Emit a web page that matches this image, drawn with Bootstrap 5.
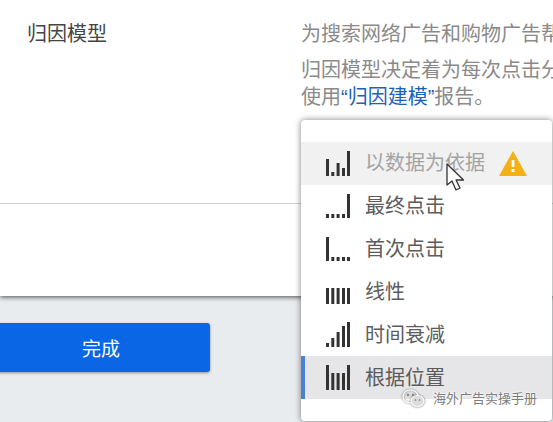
<!DOCTYPE html>
<html lang="zh-CN">
<head>
  <meta charset="UTF-8">
  <title>归因模型</title>
  <meta name="viewport" content="width=device-width, initial-scale=1">
  <link href="https://cdn.jsdelivr.net/npm/bootstrap@5.3.0/dist/css/bootstrap.min.css" rel="stylesheet">
  <script src="https://cdn.jsdelivr.net/npm/bootstrap@5.3.0/dist/js/bootstrap.bundle.min.js"></script>

  <style>
    html, body {
      height: 422px;
      overflow: hidden;
    }
    body {
      font-family: "Liberation Sans", "Noto Sans CJK SC", sans-serif;
      background-color: #e9ecee;
      color: #5c5c5c;
      font-size: 20px;
    }
    .panel-box {
      height: 296px;
      background-color: white;
      box-shadow: 0 1px 5px rgba(0,0,0,0.7);
      overflow: hidden;
    }
    .setting-row {
      height: 204px;
      padding-top: 19px;
      border-bottom: 1px solid #d2d2d2;
    }
    .setting-label {
      width: 301px;
      padding-left: 27px;
      color: #444;
      line-height: 30px;
    }
    .setting-desc {
      white-space: nowrap;
      color: #8a8a8a;
      line-height: 27px;
    }
    .setting-desc p {
      margin: 0;
    }
    .setting-desc .first-line {
      line-height: 30px;
      margin-bottom: 8px;
    }
    .setting-desc a {
      color: #1a62b8;
      text-decoration: none;
    }
    .done-btn {
      width: 218px;
      height: 49px;
      margin: 27px 0 0 -8px;
      padding-top: 12px;
      background-color: #0a66e4;
      border: 0;
      border-radius: 3px;
      color: white;
      font-size: 19px;
      box-shadow: 0 1px 3px rgba(0,0,0,0.4);
    }
    .model-menu {
      position: absolute;
      top: 120px;
      left: 301px;
      width: 251px;
      height: 301px;
      padding: 22px 0;
      background-color: white;
      border-radius: 4px;
      box-shadow: 0 0 6px rgba(0,0,0,0.5);
    }
    .model-menu .list-group-item {
      height: 42.85px;
      padding: 0 0 0 25px;
      border: 0;
      border-radius: 0;
      background: transparent;
      color: #5c5c5c;
      gap: 15px;
    }
    .model-menu .list-group-item.is-hover {
      background-color: #f1f1f2;
      color: #a3a3a3;
    }
    .model-menu .list-group-item.is-picked {
      background-color: #e6e6e8;
      border-left: 4px solid #4a80d6;
      padding-left: 21px;
    }
    .bars {
      width: 24px;
      height: 25px;
      fill: #333;
      flex: none;
    }
    .warn-icon {
      margin-left: -1px;
      flex: none;
    }
    .pointer-icon {
      position: absolute;
      top: 163px;
      left: 446px;
    }
    .wm {
      position: absolute;
      top: 389px;
      left: 402px;
      gap: 8px;
      font-size: 13px;
      line-height: 18px;
      color: #7c7c7c;
      white-space: nowrap;
      text-shadow: 0 0 2px white, 0 0 2px white, 0 0 2px white;
    }
    .wm svg {
      filter: drop-shadow(0 0 1px #666);
    }
  </style>
</head>
<body>
  <div class="panel-box">
    <div class="setting-row d-flex">
      <div class="setting-label flex-shrink-0">归因模型</div>
      <div class="setting-desc">
        <p class="first-line">为搜索网络广告和购物广告帮助您选择归因模型</p>
        <p>归因模型决定着为每次点击分配多少转化功劳</p>
        <p>使用<a href="#">“归因建模”</a>报告。</p>
      </div>
    </div>
  </div>
  <button class="done-btn btn d-block">完成</button>

  <!-- model dropdown, open over the form -->
  <div class="model-menu list-group list-group-flush">
    <div class="list-group-item d-flex align-items-center is-hover">
      <svg class="bars" viewBox="0 0 24 25"><rect x="0" y="8" width="3" height="17"/><rect x="5.3" y="21" width="3" height="4"/><rect x="10.6" y="12" width="3" height="13"/><rect x="16" y="17" width="3" height="8"/><rect x="21" y="0" width="3" height="25"/></svg>
      <span>以数据为依据</span>
      <svg class="warn-icon" width="28" height="25" viewBox="0 0 28 25"><path d="M14 0 28 25H0Z" fill="#f4b015"/><rect x="12.6" y="9" width="2.8" height="7" fill="white"/><rect x="12.6" y="18" width="2.8" height="3" fill="white"/></svg>
    </div>
    <div class="list-group-item d-flex align-items-center">
      <svg class="bars" viewBox="0 0 24 25"><rect x="0" y="20" width="3" height="4"/><rect x="5.3" y="20" width="3" height="4"/><rect x="10.6" y="20" width="3" height="4"/><rect x="16" y="20" width="3" height="4"/><rect x="21" y="0" width="3" height="24"/></svg>
      <span>最终点击</span>
    </div>
    <div class="list-group-item d-flex align-items-center">
      <svg class="bars" viewBox="0 0 24 25"><rect x="0" y="0" width="3" height="24"/><rect x="5.3" y="20" width="3" height="4"/><rect x="10.6" y="20" width="3" height="4"/><rect x="16" y="20" width="3" height="4"/><rect x="21" y="20" width="3" height="4"/></svg>
      <span>首次点击</span>
    </div>
    <div class="list-group-item d-flex align-items-center">
      <svg class="bars" viewBox="0 0 24 25"><rect x="0" y="9" width="3" height="16"/><rect x="5.3" y="9" width="3" height="16"/><rect x="10.6" y="9" width="3" height="16"/><rect x="16" y="9" width="3" height="16"/><rect x="21" y="9" width="3" height="16"/></svg>
      <span>线性</span>
    </div>
    <div class="list-group-item d-flex align-items-center">
      <svg class="bars" viewBox="0 0 24 25"><rect x="0" y="21" width="3" height="4"/><rect x="5.3" y="16" width="3" height="9"/><rect x="10.6" y="10" width="3" height="15"/><rect x="16" y="4" width="3" height="21"/><rect x="21" y="0" width="3" height="25"/></svg>
      <span>时间衰减</span>
    </div>
    <div class="list-group-item d-flex align-items-center is-picked">
      <svg class="bars" viewBox="0 0 24 25"><rect x="0" y="0" width="3" height="25"/><rect x="5.3" y="8" width="3" height="17"/><rect x="10.6" y="8" width="3" height="17"/><rect x="16" y="8" width="3" height="17"/><rect x="21" y="0" width="3" height="25"/></svg>
      <span>根据位置</span>
    </div>
  </div>

  <svg class="pointer-icon" width="19" height="28" viewBox="0 0 19 28"><path d="M1 1V22L6 18 10 27 14 25 10 17H17.5Z" fill="white" stroke="#333" stroke-width="1.3" stroke-linejoin="round"/></svg>

  <div class="wm d-flex align-items-center">
    <svg width="23" height="19" viewBox="0 0 23 19" fill="none" stroke="white" stroke-width="1.2"><ellipse cx="8.5" cy="7.5" rx="7.5" ry="6.5"/><ellipse cx="15.5" cy="12" rx="6.5" ry="5.5" fill="#dcdcdc"/><circle cx="6" cy="6" r="1" fill="#777" stroke="none"/><circle cx="11" cy="6" r="1" fill="#777" stroke="none"/><circle cx="13.5" cy="11" r=".8" fill="#777" stroke="none"/><circle cx="17.5" cy="11" r=".8" fill="#777" stroke="none"/></svg>
    <span>海外广告实操手册</span>
  </div>
</body>
</html>
